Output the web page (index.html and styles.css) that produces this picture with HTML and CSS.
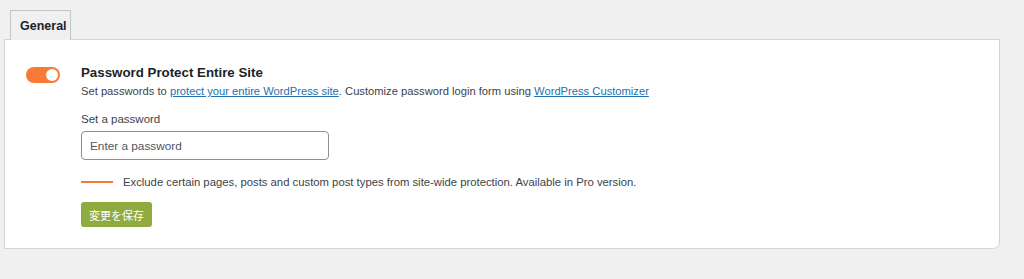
FILE: index.html
```html
<!DOCTYPE html>
<html lang="ja">
<head>
  <meta charset="UTF-8" />
  <title>Password Protect</title>
  <link rel="stylesheet" href="styles.css">
</head>
<body>
  <div class="wrap">
    <div class="tabs">
      <span class="tab">General</span>
    </div>
    <div class="panel">
      <div class="row">
        <span class="toggle"><span class="knob"></span></span>
        <div class="content">
          <h2>Password Protect Entire Site</h2>
          <p class="desc">Set passwords to <a href="#">protect your entire WordPress site</a>. Customize password login form using <a href="#">WordPress Customizer</a></p>
          <label class="field-label">Set a password</label>
          <input class="pw" type="text" placeholder="Enter a password" />
          <div class="pro-note">
            <span class="dash"></span>
            <span>Exclude certain pages, posts and custom post types from site-wide protection. Available in Pro version.</span>
          </div>
          <button class="save">変更を保存</button>
        </div>
      </div>
    </div>
  </div>
</body>
</html>
```

FILE: styles.css
```css
* {
  margin: 0;
  padding: 0;
  box-sizing: border-box;
}
html, body {
  background: #f0f0f1;
  font-family: "Liberation Sans", Arial, "Noto Sans CJK JP", sans-serif;
  color: #3c434a;
  font-size: 12px;
}
.wrap {
  padding: 10px 24px 0 4px;
}
.tabs {
  display: flex;
  padding-left: 6px;
  margin-bottom: -1px;
  position: relative;
}
.tab {
  display: block;
  background: #f0f0f1;
  border: 1px solid #c3c4c7;
  border-bottom: none;
  height: 30px;
  line-height: 30px;
  padding: 0 9px;
  font-weight: bold;
  font-size: 12.5px;
  color: #1d2327;
  width: 61px;
}
.panel {
  background: #fff;
  border: 1px solid #d3d4d6;
  border-radius: 0 0 7px 0;
  height: 210px;
  padding: 25px 21px 0 21px;
}
.row {
  display: flex;
  gap: 21px;
}
.toggle {
  flex: none;
  width: 34px;
  height: 16px;
  border-radius: 8px;
  background: #f97a36;
  margin-top: 2px;
  position: relative;
}
.knob {
  position: absolute;
  right: 2px;
  top: 2px;
  width: 12px;
  height: 12px;
  border-radius: 50%;
  background: #fff;
}
h2 {
  font-size: 13.3px;
  font-weight: bold;
  color: #1d2327;
  line-height: 16px;
  margin-bottom: 3px;
}
.desc {
  font-size: 11.2px;
  line-height: 14px;
}
.desc a {
  color: #2271b1;
  text-decoration: underline;
}
.field-label {
  display: block;
  margin-top: 14px;
  font-size: 11.5px;
  line-height: 14px;
}
.pw {
  display: block;
  margin-top: 5px;
  width: 248px;
  height: 29px;
  border: 1px solid #8c8f94;
  border-radius: 4px;
  padding: 0 8px;
  font-family: inherit;
  font-size: 11.8px;
  color: #2c3338;
  background: #fff;
}
.pw::placeholder {
  color: #50575e;
}
.pro-note {
  display: flex;
  align-items: center;
  gap: 10px;
  margin-top: 15px;
  font-size: 11.3px;
  line-height: 14px;
}
.dash {
  width: 32px;
  height: 2px;
  background: #f97a36;
}
.save {
  display: block;
  margin-top: 13px;
  background: #8fab3f;
  color: #fff;
  border: none;
  border-radius: 3px;
  height: 25px;
  padding: 0 8px;
  font-size: 11px;
  font-family: "Noto Sans CJK JP", sans-serif;
}
```
